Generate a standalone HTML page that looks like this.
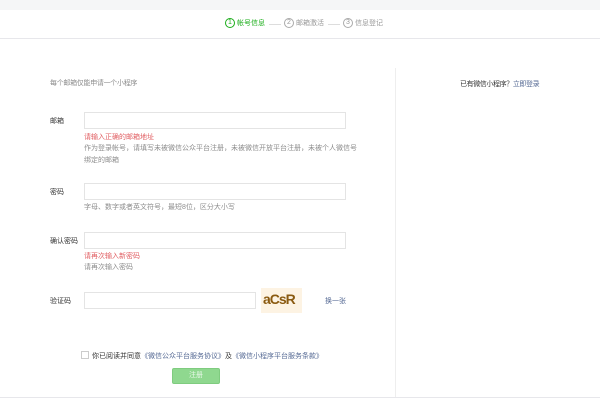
<!DOCTYPE html>
<html><head><meta charset="utf-8"><style>
*{margin:0;padding:0;box-sizing:border-box}
body{width:600px;height:400px;background:#fff;position:relative;overflow:hidden;font-family:"Liberation Sans","Noto Sans CJK SC",sans-serif;font-size:7px;color:#353535}
.a{position:absolute;white-space:nowrap}
.top{left:0;top:0;width:600px;height:10px;background:#f5f6f7}
.hd{left:0;top:38px;width:600px;height:1px;background:#e7e7eb}
.inp{position:absolute;border:1px solid #e4e4e4;background:#fff;height:17px}
.lbl{color:#353535}
.err{color:#e15f63}
.tip{color:#8d8d8d;line-height:12px}
.c{display:inline-block;width:10px;height:10px;border:1px solid #999;border-radius:50%;font-size:7px;line-height:8px;text-align:center;vertical-align:middle;margin-right:2px}
a{color:#576b95;text-decoration:none}
</style></head><body>
<div class="a top"></div>
<div class="a" style="left:225px;top:18px;color:#1aad19"><span class="c" style="border-color:#1aad19">1</span>帐号信息</div>
<div class="a" style="left:269px;top:24px;width:12px;height:1px;background:#ddd"></div>
<div class="a" style="left:284px;top:18px;color:#999"><span class="c" style="border-color:#aaa">2</span>邮箱激活</div>
<div class="a" style="left:328px;top:24px;width:12px;height:1px;background:#ddd"></div>
<div class="a" style="left:343px;top:18px;color:#999"><span class="c" style="border-color:#aaa">3</span>信息登记</div>
<div class="a hd"></div>
<div class="a" style="left:395px;top:68px;width:1px;height:330px;background:#eee"></div>
<div class="a" style="left:0;top:397px;width:600px;height:1px;background:#e7e7eb"></div>
<div class="a tip" style="left:50px;top:78px;color:#8d8d8d;letter-spacing:-0.3px">每个邮箱仅能申请一个小程序</div>
<div class="a" style="left:460px;top:79px;letter-spacing:-0.4px">已有微信小程序？<a>立即登录</a></div>

<div class="a lbl" style="left:50px;top:116px">邮箱</div>
<div class="inp" style="left:84px;top:112px;width:262px"></div>
<div class="a err" style="left:84px;top:132px">请输入正确的邮箱地址</div>
<div class="a tip" style="left:84px;top:143px">作为登录帐号，请填写未被微信公众平台注册，未被微信开放平台注册，未被个人微信号<br>绑定的邮箱</div>

<div class="a lbl" style="left:50px;top:187px">密码</div>
<div class="inp" style="left:84px;top:183px;width:262px"></div>
<div class="a tip" style="left:84px;top:202px">字母、数字或者英文符号，最短8位，区分大小写</div>

<div class="a lbl" style="left:50px;top:236px">确认密码</div>
<div class="inp" style="left:84px;top:232px;width:262px"></div>
<div class="a err" style="left:84px;top:251px">请再次输入新密码</div>
<div class="a tip" style="left:84px;top:262px">请再次输入密码</div>

<div class="a lbl" style="left:50px;top:296px">验证码</div>
<div class="inp" style="left:84px;top:292px;width:172px"></div>
<div class="a" style="left:261px;top:288px;width:41px;height:25px;background:#fdf3e3;overflow:hidden"><span style="position:absolute;left:2px;top:3px;font:900 14px 'Liberation Sans',sans-serif;color:#8a5a10;letter-spacing:-1px">aCsR</span></div>
<div class="a" style="left:325px;top:296px"><a>换一张</a></div>

<div class="a" style="left:81px;top:351px;width:8px;height:8px;border:1px solid #ccc;background:#fff"></div>
<div class="a" style="left:92px;top:351px">你已阅读并同意<a>《微信公众平台服务协议》</a>及<a>《微信小程序平台服务条款》</a></div>
<div class="a" style="left:172px;top:368px;width:48px;height:16px;background:#8fd88f;border:1px solid #7fcc7f;border-radius:2px;color:#e8f8e8;text-align:center;line-height:14px">注册</div>
</body></html>
